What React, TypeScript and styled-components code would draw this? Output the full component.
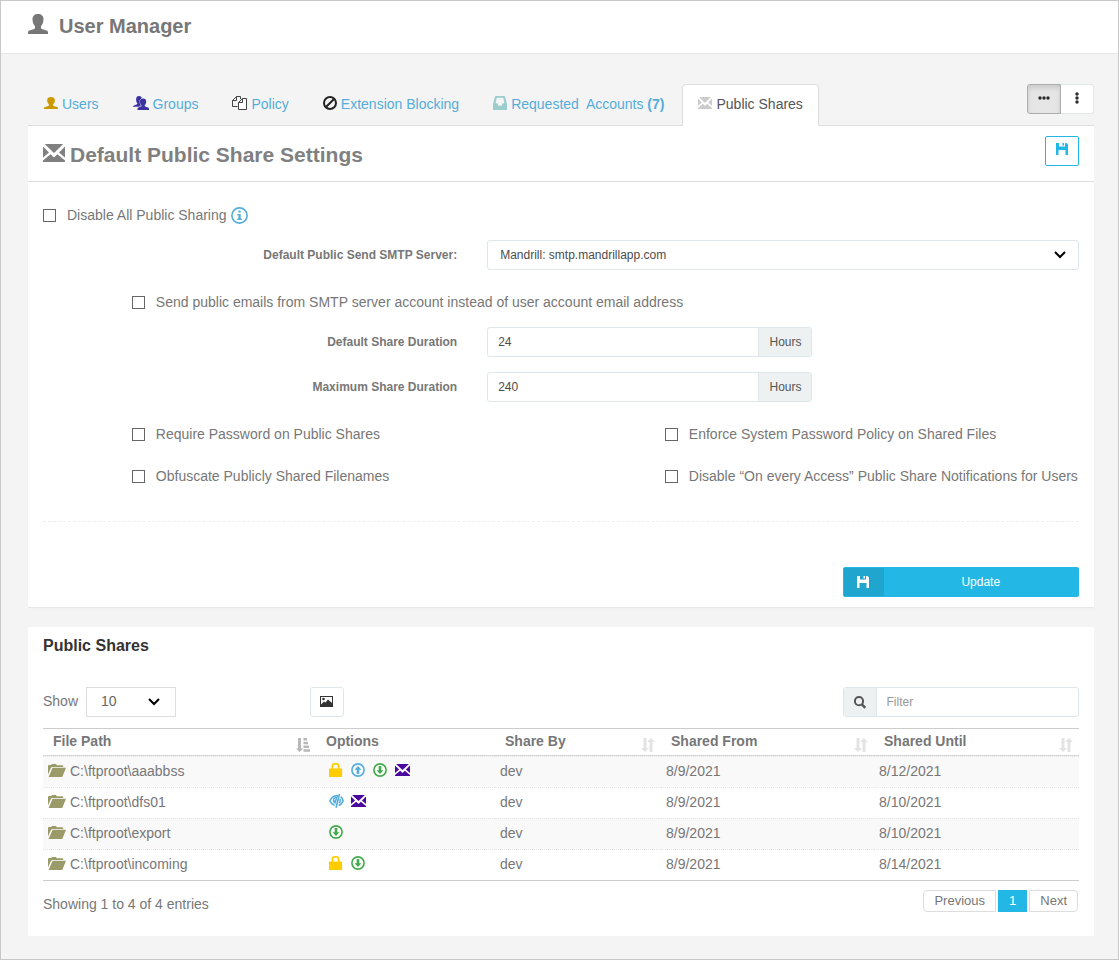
import React from "react";
import styled, { createGlobalStyle, css } from "styled-components";

const GlobalStyle = createGlobalStyle`
  *, *::before, *::after { box-sizing: border-box; }
  body {
    margin: 0;
    background: #f4f4f4;
    color: #777;
    font: 14px/20px "Liberation Sans", Arial, sans-serif;
  }
  button, input, select { font-family: inherit; }
`;

/* ---------- icons ---------- */

type IconProps = { width?: number; height?: number; color?: string };

const Svg = styled.svg`
  display: block;
  flex: none;
`;

const UserIcon = ({ width = 14, height = 14, color = "currentColor" }: IconProps) => (
  <Svg width={width} height={height} viewBox="0 0 20 20" preserveAspectRatio="none" fill={color} aria-hidden="true">
    <path d="M10 0c3.400 0 5.500 2 5.500 5.300 0 2.800-1 5.300-2.500 6.900v1.600c0 .5.300.9.800 1.100l4.800 1.600c.9.300 1.400 1 1.400 2V20H0v-1.500c0-1 .5-1.700 1.400-2l4.800-1.600c.5-.2.800-.6.800-1.100v-1.600C5.500 10.600 4.500 8.100 4.500 5.300 4.500 2 6.600 0 10 0z" />
  </Svg>
);

const GroupIcon = () => (
  <Svg width={16} height={14} viewBox="0 0 16 14" fill="#3a32a0" aria-hidden="true">
    <path d="M6 0c1.700 0 3 1 3 3.200 0 1.800-.5 3.200-1.300 4v3.500H0c0-.6.400-1 1-1.300l3-1.200c.3-.1.500-.4.400-.8C3.600 6.500 3.100 5.100 3.100 3.400 3.100 1.200 4.200 0 6 0z" />
    <path
      d="M10 2.400c2.200 0 3.200 1.200 3.200 3 0 1.500-.5 2.800-1.400 3.600v.9c0 .3.200.5.500.6l2.700 1c.6.200 1 .6 1 1.200V14H4.500v-1.300c0-.6.300-1 .9-1.200l2.500-1c.3-.1.500-.3.500-.6V9C7.500 8.200 7 6.900 7 5.400c0-1.800 1-3 3-3z"
      stroke="#f4f4f4"
      strokeWidth=".9"
      paintOrder="stroke"
    />
  </Svg>
);

const PolicyIcon = () => (
  <Svg width={15} height={14} viewBox="0 0 15 14" fill="none" stroke="#444" strokeWidth="1" aria-hidden="true">
    <path d="M5.500 10.500H.5V4.500L4.500.5H8.500V3" />
    <path d="M.5 4.500h4v-4" />
    <path d="M6.500 13.500V6.500L10.500 2.500h4v11z" fill="#fff" />
    <path d="M6.500 6.500H10.500V2.500" />
  </Svg>
);

const BanIcon = () => (
  <Svg width={14} height={14} viewBox="0 0 14 14" fill="none" stroke="#222" strokeWidth="2" aria-hidden="true">
    <circle cx="7" cy="7" r="6" />
    <path d="M3 11L11 3" />
  </Svg>
);

const InboxIcon = () => (
  <Svg width={14} height={14} viewBox="0 0 15 14" preserveAspectRatio="none" fill="#9acdcc" fillRule="evenodd" aria-hidden="true">
    <path d="M3.200 0h8.600c.6 0 1 .3 1.100.9L15 8v5.300c0 .4-.3.700-.7.700H.7c-.4 0-.7-.3-.7-.7V8L2.100.9C2.200.3 2.600 0 3.200 0zM4 1.800L2.800 7.300h1.900l1.200 2.400h3.200l1.200-2.400h1.900L11 1.800z" />
  </Svg>
);

const EnvelopeIcon = ({ width = 14, height = 12, color = "#cccccc" }: IconProps) => (
  <Svg width={width} height={height} viewBox="0 0 22 18" preserveAspectRatio="none" fill={color} aria-hidden="true">
    <path d="M1.700 0H20.300L11 9z" />
    <path d="M0 2.400L6 8.400 0 13.600z" />
    <path d="M22 2.400L16 8.400 22 13.600z" />
    <path d="M0 18v-1.400L7.600 10.200l3.400 3.200 3.400-3.200L22 16.600V18z" />
  </Svg>
);

const SaveIcon = () => (
  <Svg width={12} height={12} viewBox="0 0 12 12" fill="currentColor" fillRule="evenodd" aria-hidden="true">
    <path d="M0 0h3v3.500h6V0h1.300L12 1.500V12H9.500V7H2.500v5H0z" />
    <path d="M6.500 0H8v2.600H6.500z" />
  </Svg>
);

const InfoIcon = () => (
  <Svg width={17} height={17} viewBox="0 0 17 17" aria-hidden="true">
    <circle cx="8.500" cy="8.500" r="7.600" fill="none" stroke="#55addb" strokeWidth="1.600" />
    <path d="M7.300 3.500h2.400v2H7.300zM6.300 6.900h3.400v4.600h1.200V13H6.300v-1.500h1.100V8.300H6.300z" fill="#55addb" />
  </Svg>
);

const ChevronIcon = () => (
  <Svg width={12} height={8} viewBox="0 0 12 8" fill="none" stroke="#000" strokeWidth="2" aria-hidden="true">
    <path d="M1 1L6 6L11 1" />
  </Svg>
);

const PictureIcon = () => (
  <Svg width={13} height={11} viewBox="0 0 13 11" fill="#333" fillRule="evenodd" aria-hidden="true">
    <path d="M0 0h13v11H0zM1 1v7.500L4 5.500l1.500 1L8 3.500l4 3.500V1z" />
    <circle cx="3.500" cy="3" r="1.300" />
  </Svg>
);

const SearchIcon = () => (
  <Svg width={12} height={13} viewBox="0 0 12 13" fill="none" stroke="#555" aria-hidden="true">
    <circle cx="5" cy="5.200" r="4.100" strokeWidth="2" />
    <path d="M7.800 8.300L11.300 11.800" strokeWidth="2.400" />
  </Svg>
);

const DotsIcon = ({ vertical }: { vertical?: boolean }) => (
  <Svg width={12} height={12} viewBox="0 0 12 12" fill="#2b2b2b" aria-hidden="true">
    {[2, 6, 10].map((p) => (
      <circle key={p} cx={vertical ? 6 : p} cy={vertical ? p : 6} r="1.700" />
    ))}
  </Svg>
);

const SortIcon = () => (
  <Svg width={14} height={14} viewBox="0 0 14 14" fill="#e3e3e3" aria-hidden="true">
    <path d="M2.500 0h3v10H8l-4 4-4-4h2.500z" />
    <path d="M8.500 14h3V4H14l-4-4-2.600 2.600L6.500 4h2z" />
  </Svg>
);

const SortActiveIcon = () => (
  <Svg width={14} height={14} viewBox="0 0 14 14" fill="#b8b8b8" aria-hidden="true">
    <path d="M2 0h3v10.500h2.500L3.500 14 0 10.500h2z" />
    <path d="M7.500 0h3.500v2.500H7.500zM7.500 3.700h4.500v2.500H7.500zM7.500 7.400h5.500v2.500H7.500zM7.500 11.200h6.500v2.500H7.500z" />
  </Svg>
);

const FolderIcon = () => (
  <Svg width={18} height={13} viewBox="0 0 18 13" fill="#9b9a69" aria-hidden="true">
    <path d="M0 10.500V1.700L.8 1h2.400L3.800 0h4.200l.8 1.200h5.400c.6 0 1 .3 1 .8v1H4.600c-.8 0-1.200.2-1.600.8z" />
    <path d="M4.600 3.800H18l-3.400 8.400c-.2.500-.5.800-1 .8H.6z" />
  </Svg>
);

const LockIcon = () => (
  <Svg width={14} height={14} viewBox="0 0 14 14" fill="#ffcc00" fillRule="evenodd" aria-hidden="true">
    <path d="M2.500 5.500V3C2.500 1 3.700 0 5.500 0h2c1.800 0 3 1 3 3v2.500h2c.4 0 .6.200.6.600v7.300c0 .4-.2.600-.6.600H.600c-.4 0-.6-.2-.6-.6V6.100c0-.4.200-.6.600-.6zM4.300 5.500h4.400V3C8.700 2 8.300 1.700 7.500 1.700H5.500C4.700 1.700 4.300 2 4.300 3z" />
  </Svg>
);

const ArrowCircle = ({ up }: { up?: boolean }) => (
  <Svg width={14} height={14} viewBox="0 0 14 14" aria-hidden="true">
    <circle cx="7" cy="7" r="6.100" fill="none" stroke={up ? "#55addb" : "#43ab4b"} strokeWidth="1.600" />
    <path
      d={up ? "M7 3L10.400 6.800H8.300V11H5.700V6.800H3.600z" : "M7 11L10.400 7.200H8.300V3H5.700V7.200H3.600z"}
      fill={up ? "#55addb" : "#43ab4b"}
    />
  </Svg>
);

const EyeOffIcon = () => (
  <Svg width={15} height={14} viewBox="0 0 15 14" fill="none" stroke="#55addb" aria-hidden="true">
    <path d="M9 1.900C5.500 1.400 2.500 3.500.9 6.800c1 2.300 2.700 3.900 4.800 4.500" strokeWidth="1.600" />
    <path d="M10.500 0L7 13.800" strokeWidth="1.600" />
    <path d="M11.700 2.700c1.200.9 2 2.200 2.400 4-.8 2.400-2.300 4-4.400 4.600" strokeWidth="1.600" />
    <path d="M8.800 2.600C6 2.300 3.800 4 3.800 6.300c0 1.900.9 3.100 2.700 3.600z" fill="#55addb" stroke="none" />
    <path d="M6.800 4.500c-.9.300-1.300 1-1.300 1.900" stroke="#fff" strokeWidth=".8" />
    <path d="M11 4.800c.6 1.500.2 3.200-1 4.200" strokeWidth="1.400" />
  </Svg>
);

/* ---------- page shell ---------- */

const Page = styled.div`
  min-height: 100vh;
  border: 1px solid #c8c8c8;
`;

const Header = styled.header`
  display: flex;
  align-items: center;
  gap: 11px;
  height: 53px;
  padding: 0 27px 6px;
  background: #fff;
  border-bottom: 1px solid #e8e8e8;
`;

const PageTitle = styled.h1`
  margin: 0;
  padding-top: 3px;
  font-size: 20px;
  line-height: 24px;
`;

const Main = styled.main`
  padding: 30px 24px 23px 27px;
`;

const TabBar = styled.div`
  display: flex;
  justify-content: space-between;
  align-items: flex-start;
  border-bottom: 1px solid #ddd;
`;

const TabList = styled.nav`
  display: flex;
  gap: 2px;
  margin-bottom: -1px;
`;

const Tab = styled.a<{ $active?: boolean }>`
  display: flex;
  align-items: center;
  gap: 4px;
  height: 42px;
  padding: 0 15px 2px;
  border: 1px solid transparent;
  border-radius: 4px 4px 0 0;
  color: #55addb;
  text-decoration: none;
  white-space: pre;
  svg {
    margin-bottom: 2px;
  }
  ${(p) =>
    p.$active &&
    css`
      color: #555;
      background: #fff;
      border-color: #ddd #ddd #fff;
    `}
`;

const ButtonGroup = styled.div`
  display: flex;
`;

const ViewButton = styled.button<{ $active?: boolean }>`
  display: flex;
  justify-content: center;
  align-items: center;
  width: 33px;
  height: 30px;
  padding: 0 0 2px;
  border: 1px solid #dfe8e8;
  border-left: 0;
  border-radius: 0 3px 3px 0;
  background: #fff;
  ${(p) =>
    p.$active &&
    css`
      width: 34px;
      border: 1px solid #adadad;
      border-radius: 3px 0 0 3px;
      background: #e6e6e6;
      box-shadow: inset 0 3px 5px rgba(0, 0, 0, 0.125);
    `}
`;

const Card = styled.section`
  background: #fff;
  & + & {
    margin-top: 20px;
  }
`;

/* ---------- settings form ---------- */

const CardHeader = styled.div`
  display: flex;
  justify-content: space-between;
  align-items: flex-start;
  height: 56px;
  padding: 10px 15px;
  border-bottom: 1px solid #ddd;
`;

const CardTitle = styled.h2`
  display: flex;
  align-items: center;
  gap: 5px;
  margin: 0;
  padding-top: 6px;
  font-size: 21px;
  line-height: 26px;
  color: #808080;
  svg {
    margin-bottom: 4px;
  }
`;

const SaveButton = styled.button`
  display: flex;
  justify-content: center;
  align-items: center;
  width: 34px;
  height: 30px;
  padding: 0 0 4px;
  border: 1px solid #23b7e5;
  border-radius: 2px;
  background: #fff;
  color: #23b7e5;
`;

const Form = styled.form`
  padding: 23px 15px 10px;
  box-shadow: 0 1px 1px rgba(0, 0, 0, 0.05);
`;

const Grid = styled.div<{ $top?: number }>`
  display: grid;
  grid-template-columns: repeat(12, minmax(0, 1fr));
  column-gap: 30px;
  align-items: center;
  margin-top: ${(p) => p.$top ?? 0}px;
`;

const Cell = styled.div<{ $start: number; $span: number }>`
  grid-column: ${(p) => p.$start} / span ${(p) => p.$span};
  min-width: 0;
`;

const CheckLabel = styled.label`
  display: flex;
  align-items: center;
  gap: 11px;
  white-space: nowrap;
`;

const CheckBox = styled.input.attrs({ type: "checkbox" })`
  appearance: none;
  flex: none;
  width: 13px;
  height: 13px;
  margin: 0;
  border: 1px solid #666;
  background: #fff;
`;

const InlineRow = styled.div`
  display: flex;
  align-items: center;
  gap: 4px;
`;

const FieldLabel = styled.label`
  display: block;
  text-align: right;
  font-size: 12px;
  font-weight: bold;
`;

const SelectWrap = styled.div<{ $right: number }>`
  position: relative;
  svg {
    position: absolute;
    right: ${(p) => p.$right}px;
    top: 11px;
    pointer-events: none;
  }
`;

const WideSelect = styled.select`
  appearance: none;
  display: block;
  width: 100%;
  height: 30px;
  padding: 0 12px;
  border: 1px solid #dde6e9;
  border-radius: 3px;
  background: #fff;
  color: #4c4c4c;
  font-size: 12px;
`;

const InputGroup = styled.div`
  display: flex;
  height: 30px;
  border: 1px solid #dde6e9;
  border-radius: 3px;
  background: #fff;
  overflow: hidden;
`;

const TextInput = styled.input`
  flex: 1;
  min-width: 0;
  padding: 0 10px;
  border: 0;
  background: transparent;
  color: #4c4c4c;
  font-size: 12px;
  &::placeholder {
    color: #999;
    opacity: 1;
  }
`;

const Addon = styled.span<{ $side: "left" | "right" }>`
  display: flex;
  align-items: center;
  padding: 0 10px;
  background: #edf1f2;
  color: #555;
  font-size: 12px;
  border: 0 solid #dde6e9;
  border-width: ${(p) => (p.$side === "left" ? "0 1px 0 0" : "0 0 0 1px")};
`;

const Divider = styled.hr`
  margin: 35px 0 45px;
  border: 0;
  border-top: 1px dashed #eee;
`;

const UpdateButton = styled.button`
  display: flex;
  align-items: stretch;
  width: 100%;
  height: 30px;
  padding: 0;
  border: 1px solid #23b7e5;
  border-radius: 2px;
  background: #23b7e5;
  color: #fff;
  font-size: 12px;
`;

const UpdateIcon = styled.span`
  display: flex;
  justify-content: center;
  align-items: center;
  width: 40px;
  padding-right: 2px;
  background: #20a5ce;
`;

const UpdateText = styled.span`
  flex: 1;
  line-height: 28px;
`;

/* ---------- shares table ---------- */

const SharesBody = styled.div`
  padding: 9px 15px 22px;
`;

const SharesTitle = styled.h3`
  margin: 0 0 31px;
  font-size: 16px;
  line-height: 20px;
  color: #333;
`;

const ShowLabel = styled.label`
  display: flex;
  align-items: center;
  gap: 8px;
`;

const ShowText = styled.span`
  padding-bottom: 2px;
`;

const CountSelect = styled.select`
  appearance: none;
  display: block;
  width: 90px;
  height: 30px;
  padding: 0 14px 2px;
  border: 1px solid #ddd;
  border-radius: 0;
  background: #fff;
  color: #666;
  font-size: 14px;
`;

const PictureButton = styled.button`
  display: flex;
  justify-content: center;
  align-items: center;
  width: 34px;
  height: 30px;
  padding: 0 0 1px;
  border: 1px solid #dde6e9;
  border-radius: 3px;
  background: #fff;
`;

const Table = styled.table`
  width: 100%;
  margin-top: 11px;
  table-layout: fixed;
  border-collapse: separate;
  border-spacing: 0;
  border-top: 1px solid #ccc;
  border-bottom: 1px solid #ccc;
  text-align: left;
`;

const Th = styled.th`
  height: 27px;
  padding: 0 6px 0 10px;
  border-bottom: 1px solid #d8d8d8;
`;

const ThInner = styled.div`
  display: flex;
  justify-content: space-between;
  height: 24px;
  line-height: 22px;
  svg {
    margin-top: 8px;
  }
`;

const Row = styled.tr`
  &:nth-child(odd) {
    background: #f9f9f9;
  }
`;

const Td = styled.td`
  height: 31px;
  padding: 0 5px 2px;
  border-top: 1px dotted #e4e4e4;
`;

const PathCell = styled.div`
  display: flex;
  align-items: center;
  gap: 4px;
  svg {
    margin-bottom: 2px;
  }
`;

const Options = styled.div`
  display: grid;
  grid-auto-flow: column;
  grid-auto-columns: 14px;
  align-items: center;
  gap: 8px;
  padding: 0 0 2px 8px;
`;

const TableFooter = styled.div`
  display: flex;
  justify-content: space-between;
  align-items: flex-start;
  padding: 9px 1px 0 0;
`;

const Summary = styled.p`
  margin: 0;
  padding-top: 4px;
`;

const Pager = styled.div`
  display: flex;
  gap: 2px;
`;

const PageButton = styled.button<{ $kind: "prev" | "page" | "next" }>`
  height: 22px;
  padding: 0 10px 1px;
  border: 1px solid ${(p) => (p.$kind === "page" ? "#23b7e5" : "#ddd")};
  border-radius: ${(p) => (p.$kind === "prev" ? "4px 0 0 4px" : p.$kind === "next" ? "0 4px 4px 0" : "0")};
  background: ${(p) => (p.$kind === "page" ? "#23b7e5" : "#fff")};
  color: ${(p) => (p.$kind === "page" ? "#fff" : "#777")};
  font-size: 13px;
  line-height: 18px;
`;

/* ---------- data ---------- */

const columns = [
  { title: "File Path", width: 273, sort: "active" },
  { title: "Options", width: 179, sort: "none" },
  { title: "Share By", width: 166, sort: "both" },
  { title: "Shared From", width: 213, sort: "both" },
  { title: "Shared Until", width: 205, sort: "both" },
];

const optionIcons: Record<string, React.ReactNode> = {
  lock: <LockIcon />,
  upload: <ArrowCircle up />,
  download: <ArrowCircle />,
  hidden: <EyeOffIcon />,
  mail: <EnvelopeIcon width={15} color="#4a07a0" />,
};

const shares = [
  { path: "C:\\ftproot\\aaabbss", options: ["lock", "upload", "download", "mail"], by: "dev", from: "8/9/2021", until: "8/12/2021" },
  { path: "C:\\ftproot\\dfs01", options: ["hidden", "mail"], by: "dev", from: "8/9/2021", until: "8/10/2021" },
  { path: "C:\\ftproot\\export", options: ["download"], by: "dev", from: "8/9/2021", until: "8/10/2021" },
  { path: "C:\\ftproot\\incoming", options: ["lock", "download"], by: "dev", from: "8/9/2021", until: "8/14/2021" },
];

const Check = ({ children }: { children: React.ReactNode }) => (
  <CheckLabel>
    <CheckBox />
    {children}
  </CheckLabel>
);

const DurationField = ({ id, label, value, top }: { id: string; label: string; value: string; top: number }) => (
  <Grid $top={top}>
    <Cell $start={1} $span={5}>
      <FieldLabel htmlFor={id}>{label}</FieldLabel>
    </Cell>
    <Cell $start={6} $span={4}>
      <InputGroup>
        <TextInput id={id} defaultValue={value} />
        <Addon $side="right">Hours</Addon>
      </InputGroup>
    </Cell>
  </Grid>
);

export default function App() {
  return (
    <Page>
      <GlobalStyle />
      <Header>
        <UserIcon width={20} height={20} color="#777" />
        <PageTitle>User Manager</PageTitle>
      </Header>
      <Main>
        <TabBar>
          <TabList>
            <Tab href="#users"><UserIcon height={12} color="#cc9900" />Users</Tab>
            <Tab href="#groups"><GroupIcon />Groups</Tab>
            <Tab href="#policy"><PolicyIcon />Policy</Tab>
            <Tab href="#extensions"><BanIcon />Extension Blocking</Tab>
            <Tab href="#requests"><InboxIcon /><span>Requested{"  "}Accounts <b>(7)</b></span></Tab>
            <Tab href="#shares" $active><EnvelopeIcon />Public Shares</Tab>
          </TabList>
          <ButtonGroup>
            <ViewButton $active aria-label="Horizontal view"><DotsIcon /></ViewButton>
            <ViewButton aria-label="Vertical view"><DotsIcon vertical /></ViewButton>
          </ButtonGroup>
        </TabBar>

        <Card>
          <CardHeader>
            <CardTitle>
              <EnvelopeIcon width={22} height={18} color="#808080" />
              Default Public Share Settings
            </CardTitle>
            <SaveButton aria-label="Save"><SaveIcon /></SaveButton>
          </CardHeader>
          <Form onSubmit={(e) => e.preventDefault()}>
            <InlineRow>
              <Check>Disable All Public Sharing</Check>
              <InfoIcon />
            </InlineRow>
            <Grid $top={15}>
              <Cell $start={1} $span={5}>
                <FieldLabel htmlFor="smtp">Default Public Send SMTP Server:</FieldLabel>
              </Cell>
              <Cell $start={6} $span={7}>
                <SelectWrap $right={13}>
                  <WideSelect id="smtp">
                    <option>Mandrill: smtp.mandrillapp.com</option>
                  </WideSelect>
                  <ChevronIcon />
                </SelectWrap>
              </Cell>
            </Grid>
            <Grid $top={22}>
              <Cell $start={2} $span={11}>
                <Check>Send public emails from SMTP server account instead of user account email address</Check>
              </Cell>
            </Grid>
            <DurationField id="default-duration" label="Default Share Duration" value="24" top={15} />
            <DurationField id="max-duration" label="Maximum Share Duration" value="240" top={15} />
            <Grid $top={22}>
              <Cell $start={2} $span={6}><Check>Require Password on Public Shares</Check></Cell>
              <Cell $start={8} $span={5}><Check>Enforce System Password Policy on Shared Files</Check></Cell>
            </Grid>
            <Grid $top={22}>
              <Cell $start={2} $span={6}><Check>Obfuscate Publicly Shared Filenames</Check></Cell>
              <Cell $start={8} $span={5}>
                <Check>Disable “On every Access” Public Share Notifications for Users</Check>
              </Cell>
            </Grid>
            <Divider />
            <Grid>
              <Cell $start={10} $span={3}>
                <UpdateButton>
                  <UpdateIcon><SaveIcon /></UpdateIcon>
                  <UpdateText>Update</UpdateText>
                </UpdateButton>
              </Cell>
            </Grid>
          </Form>
        </Card>

        <Card>
          <SharesBody>
            <SharesTitle>Public Shares</SharesTitle>
            <Grid>
              <Cell $start={1} $span={3}>
                <ShowLabel>
                  <ShowText>Show</ShowText>
                  <SelectWrap $right={16}>
                    <CountSelect>
                      <option>10</option>
                    </CountSelect>
                    <ChevronIcon />
                  </SelectWrap>
                </ShowLabel>
              </Cell>
              <Cell $start={4} $span={3}>
                <PictureButton aria-label="Thumbnails"><PictureIcon /></PictureButton>
              </Cell>
              <Cell $start={10} $span={3}>
                <InputGroup>
                  <Addon $side="left"><SearchIcon /></Addon>
                  <TextInput placeholder="Filter" aria-label="Filter" />
                </InputGroup>
              </Cell>
            </Grid>
            <Table>
              <colgroup>
                {columns.map((c) => (
                  <col key={c.title} width={c.width} />
                ))}
              </colgroup>
              <thead>
                <tr>
                  {columns.map((c) => (
                    <Th key={c.title}>
                      <ThInner>
                        {c.title}
                        {c.sort === "active" && <SortActiveIcon />}
                        {c.sort === "both" && <SortIcon />}
                      </ThInner>
                    </Th>
                  ))}
                </tr>
              </thead>
              <tbody>
                {shares.map((s) => (
                  <Row key={s.path}>
                    <Td><PathCell><FolderIcon />{s.path}</PathCell></Td>
                    <Td>
                      <Options>
                        {s.options.map((o) => (
                          <React.Fragment key={o}>{optionIcons[o]}</React.Fragment>
                        ))}
                      </Options>
                    </Td>
                    <Td>{s.by}</Td>
                    <Td>{s.from}</Td>
                    <Td>{s.until}</Td>
                  </Row>
                ))}
              </tbody>
            </Table>
            <TableFooter>
              <Summary>Showing 1 to 4 of 4 entries</Summary>
              <Pager>
                <PageButton $kind="prev">Previous</PageButton>
                <PageButton $kind="page">1</PageButton>
                <PageButton $kind="next">Next</PageButton>
              </Pager>
            </TableFooter>
          </SharesBody>
        </Card>
      </Main>
    </Page>
  );
}
